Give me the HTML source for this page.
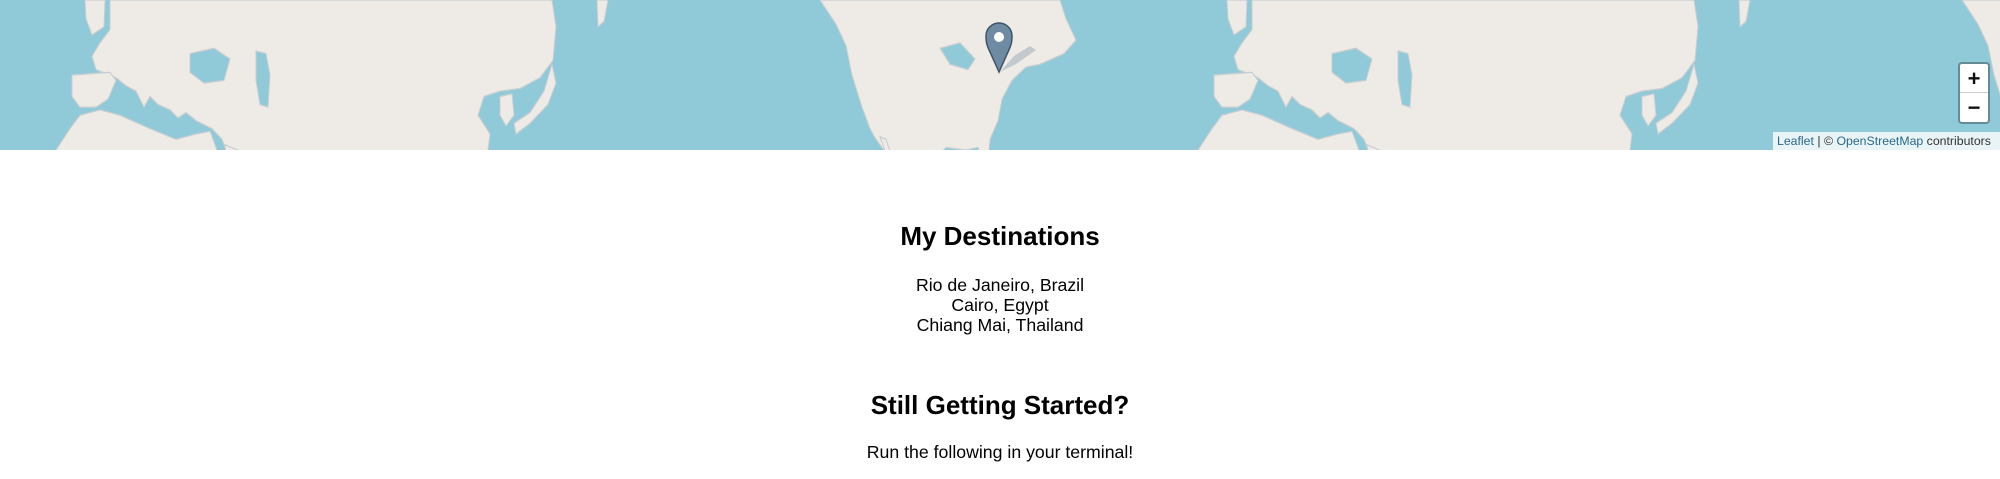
<!DOCTYPE html>
<html><head><meta charset="utf-8"><style>
html,body{margin:0;padding:0;background:#fff;width:2000px;height:479px;overflow:hidden;font-family:"Liberation Sans",Arial,sans-serif;color:#000}
#map{position:absolute;left:0;top:0;width:2000px;height:150px;background:#90c9d8;overflow:hidden}
.t{position:absolute;left:0;width:2000px;text-align:center;white-space:nowrap}
.h{font-weight:bold;font-size:26px;line-height:1.149}
.p{font-size:17.7px;line-height:1.149}
#zoom{position:absolute;left:1958px;top:62px;width:28px;height:58px;background:#fff;border:2px solid rgba(0,0,0,0.3);border-radius:4px;background-clip:padding-box}
#zoom div{height:29px;line-height:29px;text-align:center;font-size:22px;font-weight:bold;color:#111}
#zoom div:first-child{border-bottom:1px solid #ccc;height:28px}
#attr{position:absolute;left:1773px;top:132px;width:227px;height:18px;background:rgba(255,255,255,0.8);font-size:12.3px;line-height:18px;padding-left:4px;box-sizing:border-box;color:#333;white-space:nowrap}
#attr span{color:#2a6a8a}
</style></head><body>
<div id="map">
<svg width="2000" height="150" viewBox="0 0 2000 150" style="position:absolute;left:0;top:0">
<defs>
<g id="w" fill="#eeebe6" stroke="#c8cfd2" stroke-width="1">
<path d="M85,0 L105,0 L104,20 L92,26 L86,14 Z"/>
<path d="M110,0 L552,0 L556,20 L553,45 L540,58 L520,66 L500,68 L484,72 L478,86 L490,100 L487,118 L482,132 L470,142 L455,150 L440,150 L432,140 L418,150 L410,150 L398,140 L382,138 L370,150 L336,150 L328,132 L312,125 L286,126 L280,150 L270,150 L258,138 L246,128 L236,118 L226,112 L222,104 L212,96 L196,90 L186,84 L178,88 L170,82 L158,78 L150,72 L144,80 L136,68 L126,64 L116,58 L110,56 L96,52 L92,42 L100,32 L110,22 Z"/>
<path d="M72,56 L110,54 L116,60 L108,74 L96,80 L80,80 L72,72 Z"/>
<path d="M80,86 L100,82 L120,86 L150,96 L176,104 L196,100 L210,98 L216,110 L222,130 L232,150 L46,150 L48,130 L56,112 L70,96 Z"/>
<path d="M225,108 L250,116 L262,134 L282,140 L290,150 L238,150 L228,128 Z"/>
<path d="M500,72 L512,70 L514,86 L506,94 L500,86 Z"/>
<path d="M552,48 L556,62 L548,78 L530,92 L516,100 L514,92 L530,84 L544,68 Z"/>
<path d="M597,0 L608,0 L604,16 L598,20 Z"/>
<path d="M820,0 L1060,0 L1066,14 L1076,30 L1064,40 L1040,48 L1026,50 L1012,60 L1002,74 L998,90 L990,104 L988,120 L984,122 L978,110 L966,112 L946,110 L936,118 L932,136 L940,146 L950,150 L912,150 L902,136 L890,124 L884,112 L876,104 L870,96 L862,80 L852,56 L846,34 L836,18 Z"/>
<path d="M880,102 L886,104 L896,126 L892,128 Z"/>
<path d="M972,134 L1000,136 L1026,142 L1010,144 L990,140 Z"/>
</g>
<g id="lk" fill="#90c9d8" stroke="#c8cfd2" stroke-width="1">
<path d="M190,40 L214,36 L230,44 L224,60 L204,62 L190,54 Z"/>
<path d="M256,38 L266,40 L270,56 L268,80 L260,78 L256,60 Z"/>
<path d="M940,36 L960,32 L975,44 L968,52 L950,48 Z"/>
</g>
</defs>
<g transform="scale(1,1.34)">
<use href="#w"/>
<use href="#w" transform="translate(1142,0)"/>
<use href="#w" transform="translate(-1142,0)"/>
<use href="#lk"/>
<use href="#lk" transform="translate(1142,0)"/>
</g>
<path d="M1000,72 L1014,56 L1030,46 L1036,50 L1016,64 Z" fill="#6f8ba0" opacity="0.35"/>
<path d="M999,72 L990,52 C986,44 986,40 986,36 A13,13 0 0 1 1012,36 C1012,40 1012,44 1008,52 Z" fill="#6f8ba3" stroke="#3e5466" stroke-width="1.5"/>
<circle cx="999" cy="37" r="5" fill="#fff"/>
</svg>
<div id="zoom"><div>+</div><div>−</div></div>
<div id="attr"><span>Leaflet</span> | © <span>OpenStreetMap</span> contributors</div>
</div>
<div class="t h" style="top:222px">My Destinations</div>
<div class="t p" style="top:275px">Rio de Janeiro, Brazil</div>
<div class="t p" style="top:295px">Cairo, Egypt</div>
<div class="t p" style="top:315px">Chiang Mai, Thailand</div>
<div class="t h" style="top:391px">Still Getting Started?</div>
<div class="t p" style="top:442px">Run the following in your terminal!</div>
</body></html>
